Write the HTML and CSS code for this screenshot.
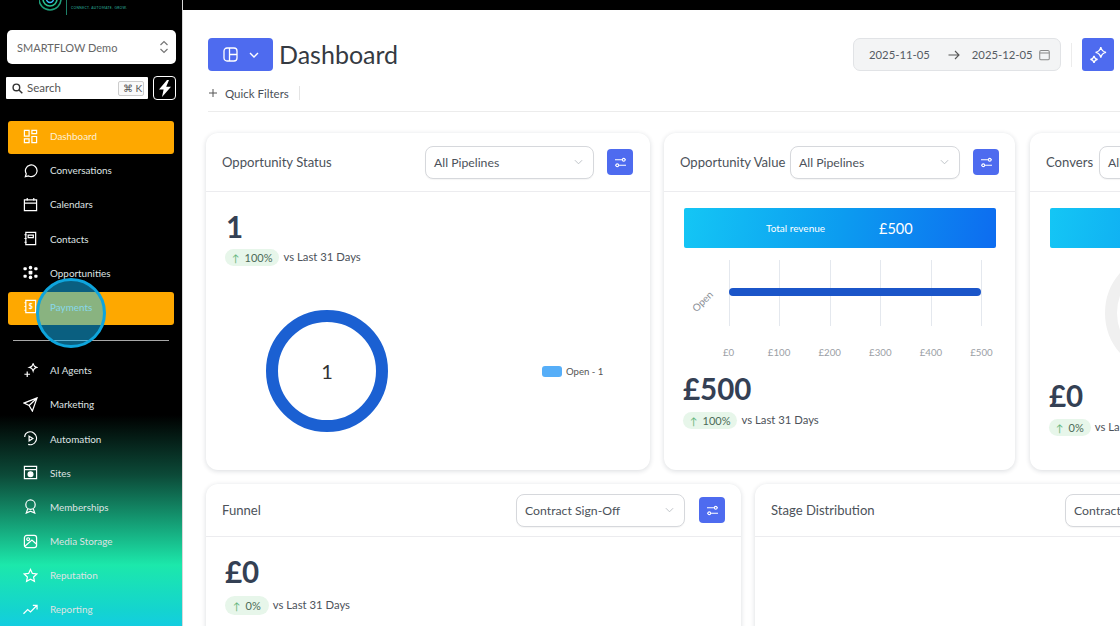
FILE: index.html
```html
<!DOCTYPE html>
<html lang="en">
<head>
<meta charset="utf-8">
<title>Dashboard</title>
<link rel="stylesheet" href="styles.css">
</head>
<body>
<div class="topstrip"></div>
<div class="app">
  <aside class="sidebar">
    <div class="logo">
      <svg class="logo-mark" width="26" height="14" viewBox="0 0 26 14" fill="none"><circle cx="11" cy="-1" r="11" stroke="#1f9d7a" stroke-width="1.6"/><circle cx="11" cy="-1" r="7" stroke="#27c08f" stroke-width="1.6"/><circle cx="11" cy="-1" r="3.5" stroke="#38bdf8" stroke-width="1.4"/></svg>
      <span class="logo-rule"></span>
      <span class="logo-tag">CONNECT. AUTOMATE. GROW.</span>
      <span class="logo-name">SMARTFLOW</span>
    </div>
    <div class="account"><span>SMARTFLOW Demo</span>
      <svg width="10" height="16" viewBox="0 0 10 16" fill="none" stroke="#777" stroke-width="1.2"><path d="M1.5 6 5 2.5 8.5 6M1.5 10 5 13.5 8.5 10"/></svg>
    </div>
    <div class="search-row">
      <div class="search">
        <svg width="11" height="11" viewBox="0 0 13 13" fill="none" stroke="#333" stroke-width="1.7"><circle cx="5.2" cy="5.2" r="3.9"/><path d="m8.2 8.2 4 4"/></svg>
        <span class="search-label">Search</span>
        <span class="kbd">⌘ K</span>
      </div>
      <div class="bolt"><svg width="14" height="17" viewBox="0 0 14 17" fill="#fff"><path d="M9 0 1 9.5h4.6L4 17l9-10.2H8.2L11 0z"/></svg></div>
    </div>
    <nav class="nav">
      <a class="item active"><svg class="ic" viewBox="0 0 16 16"><path d="M1.500 1.500h5v6h-5zM9.500 1.500h5v3.500h-5zM9.500 8h5v6.500h-5zM1.500 10.500h5v4h-5z"/></svg>Dashboard</a>
      <a class="item"><svg class="ic" viewBox="0 0 16 16"><path d="M2.500 14.500l1-3A6.200 6.200 0 1 1 6 13.800z"/></svg>Conversations</a>
      <a class="item"><svg class="ic" viewBox="0 0 16 16"><path d="M1.500 3h13v11.500h-13zM1.500 6.500h13M4.500 1v3M11.500 1v3"/></svg>Calendars</a>
      <a class="item"><svg class="ic" viewBox="0 0 16 16"><path d="M3 1.500h10.500v13H3zM5.500 4.500h5.500v2.500H5.500zM1.500 4h2.500M1.500 8h2.500M1.500 12h2.500"/></svg>Contacts</a>
      <a class="item"><svg class="ic" viewBox="0 0 16 16"><g fill="#fff" stroke="none"><circle cx="8" cy="2.800" r="1.900"/><rect x="6" y="6" width="4" height="4" rx="1"/><circle cx="8" cy="13.200" r="1.900"/><rect x="0.500" y="2.500" width="3.500" height="3" rx="1"/><rect x="12" y="2.500" width="3.500" height="3" rx="1"/><rect x="0.500" y="10.500" width="3.500" height="3" rx="1"/><rect x="12" y="10.500" width="3.500" height="3" rx="1"/></g></svg>Opportunities</a>
      <a class="item active"><svg class="ic" viewBox="0 0 16 16"><path d="M3 1.500h10.500v13H3zM1.500 4h2M1.500 8h2M1.500 12h2"/><text x="8.200" y="11" class="dollar">$</text></svg>Payments</a>
      <div class="divider"></div>
      <a class="item"><svg class="ic" viewBox="0 0 16 16"><path d="M10.800 1c.6 2.200 1.500 3.100 3.700 3.700-2.200.6-3.100 1.500-3.700 3.700-.6-2.200-1.500-3.100-3.700-3.700 2.200-.6 3.100-1.500 3.700-3.700zM4.500 9v6M1.500 12h6"/></svg>AI Agents</a>
      <a class="item"><svg class="ic" viewBox="0 0 16 16"><path d="M15 1 1 6.500l5.500 2.500L10 15zM6.500 9 15 1"/></svg>Marketing</a>
      <a class="item"><svg class="ic" viewBox="0 0 16 16"><path d="M3 2.800A6.800 6.800 0 1 1 5.500 14.300M1.800 6.500A6.800 6.800 0 0 1 3 2.800M6.500 5.500l4 2.500-4 2.500z"/></svg>Automation</a>
      <a class="item"><svg class="ic" viewBox="0 0 16 16"><path d="M1.500 1.500h13v13h-13zM1.500 5h13"/><circle cx="8" cy="9.800" r="2.600" fill="#fff"/></svg>Sites</a>
      <a class="item"><svg class="ic" viewBox="0 0 16 16"><circle cx="8" cy="6" r="5"/><path d="M5 10.500l-1.500 4.500 4.500-2 4.500 2L11 10.500"/></svg>Memberships</a>
      <a class="item"><svg class="ic" viewBox="0 0 16 16"><rect x="1.500" y="1.500" width="13" height="13" rx="2.500"/><circle cx="5.500" cy="5.500" r="1.500"/><path d="M2 13l7.500-6.500 5 4.500"/></svg>Media Storage</a>
      <a class="item"><svg class="ic" viewBox="0 0 16 16"><path d="m8 1.500 2 4.300 4.700.6-3.400 3.200.9 4.700L8 12l-4.200 2.300.9-4.700L1.300 6.400 6 5.800z"/></svg>Reputation</a>
      <a class="item"><svg class="ic" viewBox="0 0 16 16"><path d="M.5 12.500 5 8l3 2.500 6.500-6.500M10.500 3.500h4.500V8"/></svg>Reporting</a>
    </nav>
    <div class="cursor"></div>
  </aside>
  <main class="main">
    <header class="head">
      <div class="head-top">
        <button class="view-btn">
          <svg width="15" height="15" viewBox="0 0 15 15" fill="none" stroke="#fff" stroke-width="1.300"><rect x="1" y="1" width="13" height="13" rx="3"/><path d="M6.500 1v13M6.500 7.500H14"/></svg>
          <svg width="10" height="6" viewBox="0 0 10 6" fill="none" stroke="#fff" stroke-width="1.400"><path d="m1 1 4 4 4-4"/></svg>
        </button>
        <h1>Dashboard</h1>
        <div class="head-right">
          <div class="dates"><span>2025-11-05</span>
            <svg class="date-arrow" width="12" height="10" viewBox="0 0 12 10" fill="none" stroke="#555" stroke-width="1.100"><path d="M.5 5h10.500M7 1l4 4-4 4"/></svg>
            <span>2025-12-05</span>
            <svg class="date-cal" width="11" height="12" viewBox="0 0 12 12" fill="none" stroke="#888" stroke-width="1.100"><rect x=".8" y="1" width="10.400" height="10.200" rx="1.500"/><path d="M.8 3.800h10.400"/></svg>
          </div>
          <span class="head-sep"></span>
          <button class="square-btn"><svg width="18" height="18" viewBox="0 0 18 18" fill="none" stroke="#fff" stroke-width="1.300"><path d="M11.800 1c.6 3.200 2 4.700 5.200 5.300-3.200.6-4.600 2.100-5.200 5.300-.6-3.200-2-4.700-5.200-5.300 3.200-.6 4.600-2.100 5.200-5.300zM5 9.800c.4 2.200 1.400 3.200 3.600 3.600-2.200.4-3.200 1.400-3.600 3.600-.4-2.200-1.400-3.200-3.600-3.600 2.200-.4 3.200-1.400 3.600-3.600z"/></svg></button>
        </div>
      </div>
      <div class="filters">
        <svg width="8" height="8" viewBox="0 0 8 8" stroke="#555" stroke-width="1"><path d="M4 0v8M0 4h8"/></svg>
        <span>Quick Filters</span>
        <span class="filter-sep"></span>
      </div>
    </header>
    <div class="row row-one">
      <section class="card card-status">
        <div class="card-head">
          <h2>Opportunity Status</h2>
          <div class="select"><span>All Pipelines</span><svg class="chev" viewBox="0 0 10 6"><path d="m1 1 4 4 4-4"/></svg></div>
          <button class="tune"><svg class="tune-ic" viewBox="0 0 14 12"><path d="M1 3h8M12 3h1M1 9h1M5 9h8"/><circle cx="10.500" cy="3" r="1.500"/><circle cx="3.500" cy="9" r="1.500"/></svg></button>
        </div>
        <div class="card-body">
          <div class="big">1</div>
          <div class="delta"><span class="pill"><i>↑</i>100%</span><span>vs Last 31 Days</span></div>
          <div class="donut-row">
            <div class="donut">1</div>
            <div class="legend"><span class="swatch"></span>Open - 1</div>
          </div>
        </div>
      </section>
      <section class="card card-value">
        <div class="card-head">
          <h2>Opportunity Value</h2>
          <div class="select"><span>All Pipelines</span><svg class="chev" viewBox="0 0 10 6"><path d="m1 1 4 4 4-4"/></svg></div>
          <button class="tune"><svg class="tune-ic" viewBox="0 0 14 12"><path d="M1 3h8M12 3h1M1 9h1M5 9h8"/><circle cx="10.500" cy="3" r="1.500"/><circle cx="3.500" cy="9" r="1.500"/></svg></button>
        </div>
        <div class="card-body">
          <div class="banner"><span class="banner-label">Total revenue</span><span class="banner-value">£500</span></div>
          <div class="chart">
            <span class="chart-cat">Open</span>
            <div class="plot">
              <div class="grid-lines"><i></i><i></i><i></i><i></i><i></i><i></i></div>
              <div class="bar"></div>
            </div>
            <div class="axis"><span>£0</span><span>£100</span><span>£200</span><span>£300</span><span>£400</span><span>£500</span></div>
          </div>
          <div class="big">£500</div>
          <div class="delta"><span class="pill"><i>↑</i>100%</span><span>vs Last 31 Days</span></div>
        </div>
      </section>
      <section class="card card-conv">
        <div class="card-head">
          <h2>Convers</h2>
          <div class="select"><span>All Pipelines</span></div>
        </div>
        <div class="card-body">
          <div class="banner"></div>
          <div class="conv-ring-box"><div class="conv-ring"></div></div>
          <div class="big">£0</div>
          <div class="delta"><span class="pill"><i>↑</i>0%</span><span>vs Last 31 Days</span></div>
        </div>
      </section>
    </div>
    <div class="row row-two">
      <section class="card card-funnel">
        <div class="card-head">
          <h2>Funnel</h2>
          <div class="select"><span>Contract Sign-Off</span><svg class="chev" viewBox="0 0 10 6"><path d="m1 1 4 4 4-4"/></svg></div>
          <button class="tune"><svg class="tune-ic" viewBox="0 0 14 12"><path d="M1 3h8M12 3h1M1 9h1M5 9h8"/><circle cx="10.500" cy="3" r="1.500"/><circle cx="3.500" cy="9" r="1.500"/></svg></button>
        </div>
        <div class="card-body">
          <div class="big">£0</div>
          <div class="delta"><span class="pill"><i>↑</i>0%</span><span>vs Last 31 Days</span></div>
        </div>
      </section>
      <section class="card card-stage">
        <div class="card-head">
          <h2>Stage Distribution</h2>
          <div class="select"><span>Contract Sign-Off</span></div>
        </div>
      </section>
    </div>
  </main>
</div>
</body>
</html>
```
FILE: styles.css
```css
* { box-sizing: border-box; }
html, body { margin: 0; height: 626px; overflow: hidden; background: #000; }
body { font-family: Lato, "Open Sans", sans-serif; color: #3f4652; position: relative; }
.topstrip { height: 10px; background: #000; }
.app { display: flex; height: 616px; }

.sidebar {
  width: 182px; flex: none; margin-top: -10px; height: 626px; padding: 0 8px; position: relative; overflow: hidden;
  background: linear-gradient(180deg, #000 0, #000 415px, #0c4a38 475px, #1ce8ab 565px, #14d4cf 610px, #13cde0 626px);
  box-shadow: 1px 0 0 #d8d8d8;
}
.logo { height: 30px; display: flex; align-items: flex-start; position: relative; padding-left: 31px; overflow: hidden; }
.logo-mark { flex: none; }
.logo-rule { width: 1px; height: 15px; background: #1d7f68; margin-left: 1px; }
.logo-tag { font-size: 3.300px; letter-spacing: .35px; color: #2fb9a0; margin: 6px 0 0 4px; white-space: nowrap; }
.logo-name { position: absolute; left: 63px; top: -9px; font-size: 9px; font-weight: 700; letter-spacing: 1.300px; color: #1f9d7a; }
.account {
  width: 169px; height: 34px; margin-left: -1px; background: #fff; border-radius: 5px;
  display: flex; align-items: center; justify-content: space-between; padding: 0 7px 0 10px;
  font-size: 11px; color: #666;
}
.search-row { display: flex; gap: 5px; margin: 12px 0 0 -2px; align-items: center; }
.search {
  width: 142px; height: 22px; background: #fff; display: flex; align-items: center; padding: 0 4px 0 6px; border-radius: 1px;
  font-size: 11.500px; color: #555; flex: none;
}
.search-label { margin-left: 4px; flex: 1; padding-bottom: 2px; }
.kbd { border: 1px solid #ccc; border-radius: 2px; font-size: 10px; padding: 0 4px; height: 15px; line-height: 13px; color: #555; background: #fafafa; width: 26px; white-space: nowrap; }
.bolt { width: 23px; height: 24px; border: 1px solid #fff; border-radius: 4px; display: flex; align-items: center; justify-content: center; flex: none; }
.nav { display: flex; flex-direction: column; margin-top: 21px; }
.item {
  height: 33px; margin-bottom: 1.200px; padding-bottom: 3px; display: flex; align-items: center; gap: 12px; padding-left: 15px; border-radius: 3px;
  font-size: 9.900px; color: #dfe3e3; white-space: nowrap; flex: none;
}
.item.active { background: #fea800; color: #fdf0d8; width: 166px; box-shadow: 0 1px 1px rgba(0,0,0,.1); }
.ic { width: 15px; height: 15px; flex: none; fill: none; stroke: #fff; stroke-width: 1.300; }
.dollar { font-size: 8px; font-weight: 700; fill: #fff; stroke: none; text-anchor: middle; font-family: Lato, sans-serif; }
.divider { height: 1px; background: #a8a8a8; margin: 14px 5px 14px; flex: none; }
.cursor {
  position: absolute; left: 36px; top: 278px; width: 70px; height: 70px; border-radius: 50%;
  border: 3px solid #0ea5dd; background: rgba(20, 190, 255, .5);
}

.main { flex: 1; min-width: 0; background: #fff; overflow: hidden; padding: 0 0 0 24px; }
.head { height: 102px; border-bottom: 1px solid #ececec; margin-left: 2px; }
.head-top { display: flex; align-items: center; padding-top: 28px; }
.view-btn {
  width: 65px; height: 33px; border: 0; border-radius: 4px; background: #4e6bef; display: flex; align-items: center; justify-content: center; gap: 11px; padding: 0; flex: none;
}
h1 { margin: 0 0 0 6px; font-size: 25px; font-weight: 400; color: #353a42; line-height: 33px; }
.head-right { margin-left: auto; display: flex; align-items: center; flex: none; margin-right: 6px; }
.dates {
  width: 208px; height: 33px; background: #f3f4f5; border: 1px solid #e1e3e6; border-radius: 7px;
  display: flex; align-items: center; padding: 0 0 0 15px; font-size: 11.300px; color: #555b63; white-space: nowrap;
}
.date-arrow { margin: 0 12px 0 18px; }
.date-cal { margin-left: 6px; }
.head-sep { width: 1px; height: 24px; background: #ececec; margin: 0 10px; }
.square-btn { width: 32px; height: 33px; border: 0; border-radius: 3px; background: #4e6bef; padding: 0; display: flex; align-items: center; justify-content: center; }
.filters { display: flex; align-items: center; height: 18px; margin-top: 13px; font-size: 11.500px; color: #4a4f57; padding-left: 1px; }
.filters span:first-of-type { margin-left: 8px; }
.filter-sep { width: 1px; height: 14px; background: #e4e4e4; margin-left: 10px; }

.row { display: flex; gap: 14px; flex: none; }
.row-one { height: 337px; margin-top: 21px; width: 940px; }
.row-two { margin-top: 14px; width: 940px; }
.card {
  background: #fff; border-radius: 12px; box-shadow: 0 1px 5px rgba(20,30,50,.16); flex: none; display: flex; flex-direction: column;
}
.card-status { width: 444px; }
.card-value { width: 351px; }
.card-conv { width: 300px; margin-left: 1px; margin-right: -200px; }
.card-funnel { width: 535px; height: 300px; }
.card-stage { width: 496px; height: 300px; margin-right: -100px; }
.card-head {
  height: 59px; display: flex; align-items: center; padding: 0 16px; border-bottom: 1px solid #ececef; flex: none;
}
.card-status .card-head { padding-right: 17px; }
.card-funnel .card-head, .card-stage .card-head { height: 53px; }
h2 { margin: 0; font-size: 13.100px; font-weight: 400; color: #4c525a; white-space: nowrap; flex: 1; }
.card-conv .card-head h2 { flex: none; }
.card-conv .card-head .select { margin-left: 6px; }
.select {
  width: 170px; height: 33px; flex: none; border: 1px solid #d6d8dc; border-radius: 8px; display: flex; align-items: center; justify-content: space-between;
  padding: 0 10px 0 8px; font-size: 12.250px; color: #4c525a; background: #fff; box-shadow: 0 1px 1px rgba(0,0,0,.04); white-space: nowrap;
}
.card-status .select, .card-funnel .select { width: 169px; }
.chev { width: 9px; height: 6px; fill: none; stroke: #b8bcc2; stroke-width: 1; }
.tune { width: 26px; height: 26px; margin-left: 13px; background: #4e6bef; border: 0; border-radius: 4px; padding: 0; display: flex; align-items: center; justify-content: center; flex: none; }
.card-funnel .tune { margin-left: 14px; }
.tune-ic { width: 13px; height: 11px; fill: none; stroke: #fff; stroke-width: 1.100; }
.card-body { padding: 16px 19px 0; }
.big { font-size: 29.500px; height: 36px; padding-top: 2px; line-height: 34px; font-weight: 700; color: #344054; }
.delta { display: flex; align-items: center; font-size: 11.300px; gap: 4px; margin-top: 4px; color: #4c525a; white-space: nowrap; }
.card-funnel .delta { margin-top: 5px; }
.card-status .big { margin-left: 1px; margin-bottom: -1px; }
.pill { display: inline-flex; align-items: center; height: 17px; padding: 0 7px; border-radius: 9px; background: #e7f6ea; color: #4c6b57; font-size: 11px; margin-top: 2px; }
.card-funnel .pill { height: 19px; border-radius: 10px; padding: 0 8px; }
.pill i { font-style: normal; font-size: 10px; color: #5fb57c; margin-right: 5px; }
.donut-row { display: flex; align-items: center; height: 140px; margin-top: 35px; position: relative; }
.donut {
  width: 122px; height: 122px; border-radius: 50%; border: 12px solid #1b60d2; margin-left: 41px; display: flex; align-items: center; justify-content: center;
  font-size: 20px; color: #333;
}
.legend { display: flex; align-items: center; gap: 4px; margin-left: 154px; font-size: 9.600px; color: #555; }
.swatch { width: 20px; height: 11px; border-radius: 3px; background: #56aef8; }
.banner {
  height: 40px; border-radius: 2px; background: linear-gradient(100deg, #14c6f5 0, #0c9cf0 50%, #0d6cf0 100%); display: flex; align-items: center; color: #fff; padding-left: 83px;
}
.card-value .banner { margin-left: 1px; padding-left: 82px; }
.card-conv .banner { width: 320px; margin-left: 1px; }
.banner-label { font-size: 10px; width: 113px; }
.banner-value { font-size: 14.500px; }
.chart { position: relative; height: 110px; margin-top: 12px; }
.chart-cat { position: absolute; left: 7px; top: 35px; font-size: 10px; color: #8b9097; transform: rotate(-45deg); }
.plot { position: absolute; left: 46px; right: 14px; top: 0; height: 66px; }
.grid-lines { position: absolute; inset: 0; display: flex; justify-content: space-between; }
.grid-lines i { width: 1px; height: 100%; background: #e4e8ee; }
.bar { position: absolute; left: 0; right: 1px; top: 28px; height: 8px; border-radius: 4px; background: #1b55c9; }
.axis { position: absolute; left: 45px; right: 14px; top: 86px; display: flex; justify-content: space-between; font-size: 9.700px; color: #9a9ea5; }
.axis span { width: 1px; display: flex; justify-content: center; white-space: nowrap; }
.conv-ring-box { height: 110px; margin-top: 12px; position: relative; }
.conv-ring { position: absolute; left: 56px; top: -8px; width: 122px; height: 122px; border-radius: 50%; border: 12px solid #f0f0f0; }
.card-conv .big { margin-top: 7px; }
```
